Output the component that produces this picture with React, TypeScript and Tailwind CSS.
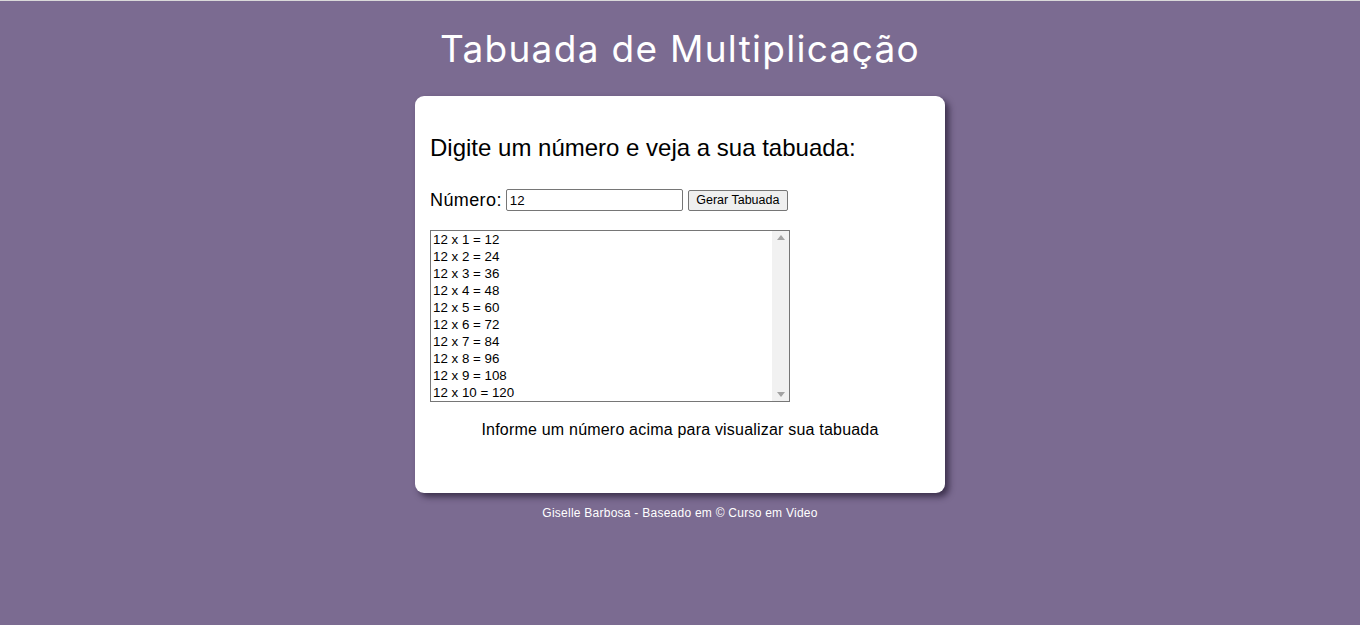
import React from "react";

export default function App() {
  const rows = Array.from({ length: 10 }, (_, i) => `12 x ${i + 1} = ${12 * (i + 1)}`);
  return (
    <div className="min-h-[625px] bg-[#7b6b91] border-t border-[#d9d9d9] font-['Liberation_Sans',Arial,sans-serif] flex flex-col items-center">
      <h1 className="mt-[27px] h-[42px] text-[37px] leading-[42px] text-white font-['Inter',sans-serif] font-normal tracking-[1.3px]">
        Tabuada de Multiplicação
      </h1>
      <div className="mt-[26px] w-[530px] h-[397px] bg-white rounded-[9px] shadow-[4px_4px_6px_rgba(40,30,55,0.75)] px-[15px] pt-[38px]">
        <h2 className="text-[24px] leading-[28px] text-black">Digite um número e veja a sua tabuada:</h2>
        <div className="mt-[26px] flex items-center h-[24px]">
          <span className="text-[18px] text-black mr-[4px] tracking-[0.4px]">Número:</span>
          <input
            type="number"
            defaultValue="12"
            className="w-[177px] h-[22px] border border-[#767676] rounded-[2px] px-[3px] text-[13.33px] text-black outline-none [appearance:textfield] [&::-webkit-inner-spin-button]:appearance-none"
          />
          <button className="ml-[5px] w-[100px] h-[21px] bg-[#efefef] border border-[#767676] rounded-[2px] text-[12.5px] text-black">
            Gerar Tabuada
          </button>
        </div>
        <div className="mt-[18px] w-[360px] h-[172px] border border-[#767676] flex">
          <div className="flex-1 pl-[2px] text-[13.33px] leading-[17px] text-black">
            {rows.map((r) => (
              <div key={r}>{r}</div>
            ))}
          </div>
          <div className="w-[17px] bg-[#f1f1f1] flex flex-col justify-between items-center py-[4px]">
            <svg width="8" height="5" viewBox="0 0 8 5"><path d="M0 5 L4 0 L8 5 Z" fill="#a3a3a3" /></svg>
            <svg width="8" height="5" viewBox="0 0 8 5"><path d="M0 0 L4 5 L8 0 Z" fill="#a3a3a3" /></svg>
          </div>
        </div>
        <p className="mt-[18px] text-center text-[16px] leading-[20px] text-black tracking-[0.2px]">
          Informe um número acima para visualizar sua tabuada
        </p>
      </div>
      <p className="mt-[13px] text-[12px] leading-[14px] text-white tracking-[0.25px]">Giselle Barbosa - Baseado em © Curso em Video</p>
    </div>
  );
}
